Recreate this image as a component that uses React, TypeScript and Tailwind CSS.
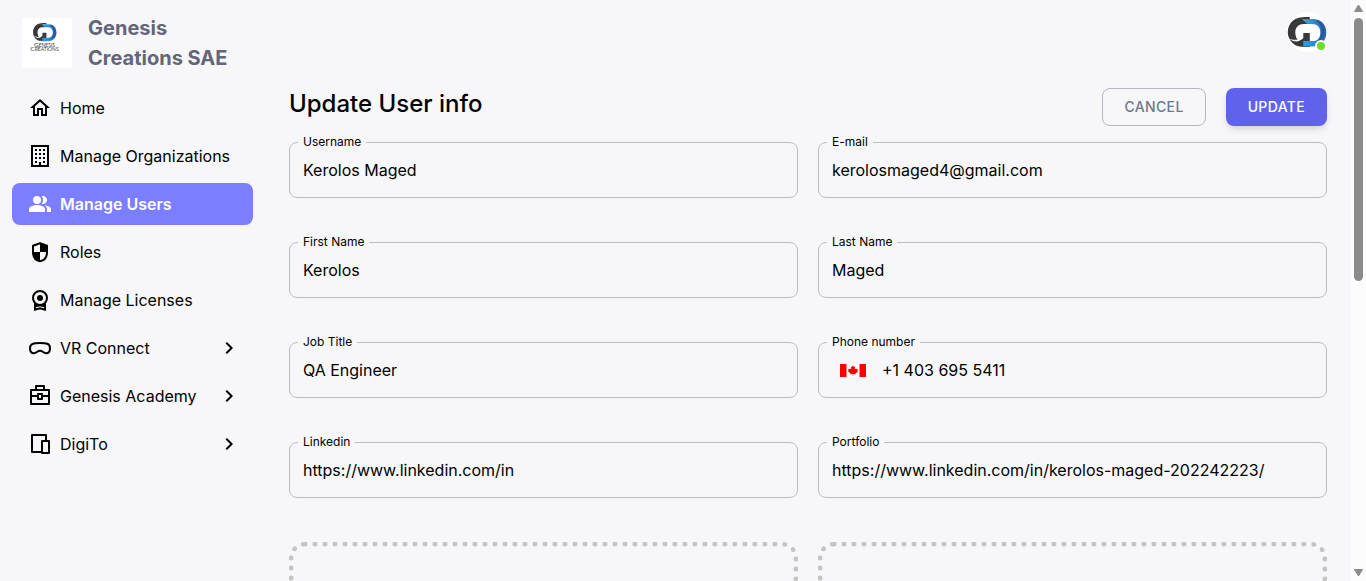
import type { ReactNode } from 'react';
import { MdChevronRight, MdOutlineHome, MdPeopleAlt } from 'react-icons/md';

const BuildingIcon = () => (
  <svg viewBox="-1 -1 24 24" className="size-6" fill="currentColor" aria-hidden="true">
    <path
      fillRule="evenodd"
      d="M2 0h18v22H2zM4 2v18h6v-3h2v3h6V2z"
    />
    <path d="M6 4h2v2H6zM10 4h2v2h-2zM14 4h2v2h-2zM6 8h2v2H6zM10 8h2v2h-2zM14 8h2v2h-2zM6 12h2v2H6zM10 12h2v2h-2zM14 12h2v2h-2zM6 16h2v2H6zM14 16h2v2h-2z" />
  </svg>
);

const ShieldIcon = () => (
  <svg viewBox="-1 -1 24 24" className="size-6" aria-hidden="true">
    <path
      d="M11 2.200 18 4.800v6.200c0 5-2.700 8.500-7 9.200-4.300-.7-7-4.200-7-9.200V4.800z"
      fill="none"
      stroke="currentColor"
      strokeWidth="2"
      strokeLinejoin="round"
    />
    <path
      d="M11 2.200 18 4.800V11h-7zM11 11v9.200c-4.300-.7-7-4.200-7-9.200z"
      fill="currentColor"
    />
  </svg>
);

const LicenseIcon = () => (
  <svg viewBox="-1 -1 24 24" className="size-6" aria-hidden="true">
    <g fill="none" stroke="currentColor" strokeWidth="2">
      <circle cx="11" cy="9" r="7" />
      <path d="M6 14v6.700l5-1.300 5 1.300V14M6.500 17.200l4.500-1 4.500 1" strokeLinejoin="miter" />
    </g>
    <circle cx="11" cy="9" r="3" fill="currentColor" />
  </svg>
);

const HeadsetIcon = () => (
  <svg viewBox="-1 -1 24 24" className="size-6" aria-hidden="true">
    <path
      d="M11 6c3.500 0 5.800.2 7.300.8C20.200 7.600 21 9.200 21 11.300c0 3.200-1.500 5-3.900 5-2.600 0-3.500-2.500-6.100-2.500s-3.500 2.500-6.100 2.500c-2.400 0-3.900-1.800-3.900-5 0-2.100.8-3.700 2.700-4.500C5.200 6.200 7.500 6 11 6z"
      fill="none"
      stroke="currentColor"
      strokeWidth="2"
    />
  </svg>
);

const BriefcaseIcon = () => (
  <svg viewBox="-1 -1 24 24" className="size-6" aria-hidden="true">
    <g fill="none" stroke="currentColor" strokeWidth="2" strokeLinejoin="round">
      <path d="M2 5h18v14H2zM7 5V1h8v4M2 11h7M13 11h7M9 9h4v5H9z" />
    </g>
  </svg>
);

const DevicesIcon = () => (
  <svg viewBox="-1 -1 24 24" className="size-6" aria-hidden="true">
    <g fill="none" stroke="currentColor" strokeWidth="2" strokeLinejoin="round">
      <path d="M17 7V2H3v17h9M13 8h7v12h-7z" />
    </g>
  </svg>
);

const Emblem = () => (
  <>
    <path
      d="M22 0C15 0 10 .3 6 3 2 5.800 0 10 0 15s2.500 9.500 6.500 12.500C9.500 29.500 13 30 22 30V16h-6.500v5c-1 1.500-3 2.500-5 2.500C8.500 21.500 7.500 18.500 7.500 15.500 7.500 10 11 7 16 7h4l-5-5h7z"
      fill="#38393c"
    />
    <path
      d="M14 2h11c8 0 13.500 5 13.500 13.500S33 29.500 25 29.500h-9.500V24H26c4.500 0 6.500-4 6.500-8.500C32.500 10 29.500 7 24 7h-4.500z"
      fill="url(#emblem-blue)"
    />
    <path d="M1 21.500c3.500 1.500 8.500 2 12.500-.5-.5 2.500-2.500 3.500-5 3.500s-5-1-7.500-3z" fill="#fff" />
    <path d="M29 3.500c5 3 6.500 8 6 12-.4 4-2 6.500-4 8.500" fill="none" stroke="#2b4f97" strokeWidth="2" />
  </>
);

const EmblemGradient = () => (
  <defs>
    <linearGradient id="emblem-blue" x1="0" x2="1">
      <stop offset="0" stopColor="#2fa3df" />
      <stop offset="0.45" stopColor="#2f8fd0" />
      <stop offset="1" stopColor="#2d5aa8" />
    </linearGradient>
  </defs>
);

const CompanyLogo = () => (
  <svg viewBox="0 0 50 50" className="size-[50px] shrink-0 bg-white" role="img" aria-label="Genesis Creations">
    <EmblemGradient />
    <g transform="translate(11 5) scale(.61)">
      <Emblem />
    </g>
    <g fill="#3a3a3e" fontFamily="Lato, sans-serif" textAnchor="middle">
      <text x="22.500" y="28.500" fontSize="6.500">
        G<tspan fontSize="5">ENESIS</tspan>
      </text>
      <text x="22.500" y="33" fontSize="6.500">
        C<tspan fontSize="5">REATIONS</tspan>
      </text>
    </g>
  </svg>
);

const Avatar = () => (
  <button type="button" aria-label="Account" className="relative size-10 rounded-full bg-white">
    <svg viewBox="0 0 40 40" className="size-10" aria-hidden="true">
      <EmblemGradient />
      <g transform="translate(.8 5)">
        <Emblem />
      </g>
    </svg>
    <span className="absolute right-0 bottom-0 size-3 rounded-full border-2 border-white bg-[#6fdd2b]" />
  </button>
);

const CanadaFlag = () => (
  <svg viewBox="0 0 26 13" className="w-[26px] h-[13px]" role="img" aria-label="Canada">
    <path d="M0 0h26v13H0z" fill="#fff" />
    <path
      d="M0 0h6.500v13H0zM19.500 0H26v13h-6.500zM13 1.200l-1 1.900-1.200-.5.500 2.900-1.400-1.200-.4.900-1.500-.2.600 1.700-.7.500 2.700 2.200-.3 1 2.500-.4v1.900h.4V10l2.500.4-.3-1 2.700-2.200-.7-.5.600-1.700-1.500.2-.4-.9-1.400 1.200.5-2.900-1.200.5z"
      fill="#f00"
    />
  </svg>
);

type NavItem = { label: string; icon: ReactNode; active?: boolean; expandable?: boolean };

const navItems: NavItem[] = [
  { label: 'Home', icon: <MdOutlineHome className="size-6" /> },
  { label: 'Manage Organizations', icon: <BuildingIcon /> },
  { label: 'Manage Users', icon: <MdPeopleAlt className="size-6" />, active: true },
  { label: 'Roles', icon: <ShieldIcon /> },
  { label: 'Manage Licenses', icon: <LicenseIcon /> },
  { label: 'VR Connect', icon: <HeadsetIcon />, expandable: true },
  { label: 'Genesis Academy', icon: <BriefcaseIcon />, expandable: true },
  { label: 'DigiTo', icon: <DevicesIcon />, expandable: true },
];

const Sidebar = () => (
  <aside className="w-[265px] shrink-0 px-3">
    <div className="flex items-center gap-4 pt-[13px] pl-[10px]">
      <CompanyLogo />
      <p className="text-xl leading-[30px] font-bold text-[#636578]">Genesis Creations SAE</p>
    </div>
    <nav className="mt-[14px] flex flex-col gap-[6px]">
      {navItems.map((item) => (
        <a
          key={item.label}
          href="#"
          className={`flex h-[42px] items-center gap-2 rounded-lg pr-3 pl-4 ${
            item.active ? 'bg-[#7a7eff] font-semibold text-white' : 'text-black'
          }`}
        >
          {item.icon}
          <span className="flex-1">{item.label}</span>
          {item.expandable && <MdChevronRight className="size-6" />}
        </a>
      ))}
    </nav>
  </aside>
);

type FieldProps = { id: string; label: string; value: string; type?: string; adornment?: ReactNode };

const Field = ({ id, label, value, type = 'text', adornment }: FieldProps) => (
  <fieldset className="min-w-0 rounded-lg border border-[#bdbdc0] pb-[7px]">
    <legend className="ml-2 px-[5px] text-xs leading-4">
      <label htmlFor={id}>{label}</label>
    </legend>
    <div className="flex items-center px-[13px]">
      {adornment && <span className="mr-4 ml-2">{adornment}</span>}
      <input id={id} type={type} defaultValue={value} className="h-10 min-w-0 flex-1 bg-transparent outline-none" />
    </div>
  </fieldset>
);

const Scrollbar = () => (
  <div className="flex w-[15px] shrink-0 flex-col items-center bg-[#fcfcfc] py-1" aria-hidden="true">
    <svg viewBox="0 0 9 8" className="h-2 w-[9px]" fill="#8b8b8b">
      <path d="M4.500 1 8.500 7.500h-8z" stroke="#8b8b8b" strokeLinejoin="round" />
    </svg>
    <div className="mt-[6px] h-[263px] w-[9px] rounded-full bg-[#8b8b8b]" />
    <svg viewBox="0 0 9 8" className="mt-auto h-2 w-[9px]" fill="#8b8b8b">
      <path d="M4.500 7 8.500 .5h-8z" stroke="#8b8b8b" strokeLinejoin="round" />
    </svg>
  </div>
);

export default function App() {
  return (
    <div className="flex h-screen overflow-hidden bg-[#f7f7f9] font-['Inter',sans-serif] text-base text-black">
      <Sidebar />
      <main className="min-w-0 flex-1 px-6">
        <header className="flex justify-end pt-3">
          <Avatar />
        </header>
        <form className="mt-9" onSubmit={(event) => event.preventDefault()}>
          <div className="flex items-start justify-between">
            <h1 className="text-2xl font-medium">Update User info</h1>
            <div className="flex gap-5 text-sm font-medium">
              <button type="button" className="h-[38px] rounded-lg border border-[#b5b6c4] px-[21px] tracking-wide text-[#6d788d]">
                CANCEL
              </button>
              <button type="submit" className="h-[38px] rounded-lg bg-[#6062ec] px-[22px] tracking-wide text-white shadow-[0_4px_8px_-3px_rgba(58,53,65,0.3)]">
                UPDATE
              </button>
            </div>
          </div>
          <div className="mt-2 grid grid-cols-2 gap-x-5 gap-y-9">
            <Field id="username" label="Username" value="Kerolos Maged" />
            <Field id="email" label="E-mail" value="kerolosmaged4@gmail.com" type="email" />
            <Field id="first-name" label="First Name" value="Kerolos" />
            <Field id="last-name" label="Last Name" value="Maged" />
            <Field id="job-title" label="Job Title" value="QA Engineer" />
            <Field id="phone" label="Phone number" value="+1 403 695 5411" type="tel" adornment={<CanadaFlag />} />
            <Field id="linkedin" label="Linkedin" value="https://www.linkedin.com/in" type="url" />
            <Field id="portfolio" label="Portfolio" value="https://www.linkedin.com/in/kerolos-maged-202242223/" type="url" />
          </div>
          <div className="mt-11 grid grid-cols-2 gap-5">
            <div className="h-48 rounded-2xl border-[5px] border-dotted border-[#c4c4c4]" />
            <div className="h-48 rounded-2xl border-[5px] border-dotted border-[#c4c4c4]" />
          </div>
        </form>
      </main>
      <Scrollbar />
    </div>
  );
}
